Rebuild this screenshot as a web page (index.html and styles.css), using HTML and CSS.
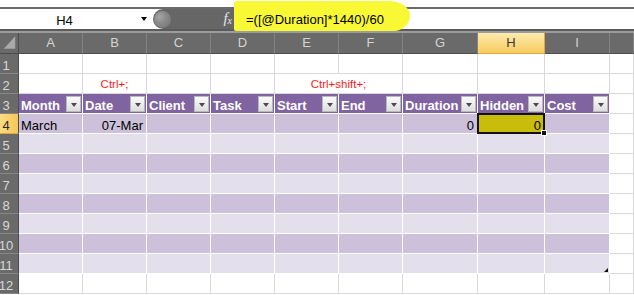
FILE: index.html
```html
<!DOCTYPE html>
<html>
<head>
<meta charset="utf-8">
<link rel="stylesheet" href="styles.css">
</head>
<body>
<div class="top">
  <div class="highlight"></div>
  <div class="topstrip"></div>
  <div class="fbar">
    <div class="namebox"><span class="nb-label">H4</span><span class="nb-arrow"></span></div>
    <div class="fxbox"><span class="knob"></span><span class="fx">f<sub>x</sub></span></div>
    <div class="formula">=([@Duration]*1440)/60</div>
  </div>
  <div class="gap"></div>
</div>
<div class="sheet">
  <!-- column headers -->
  <div class="corner"><svg width="19" height="21" viewBox="0 0 19 21"><polygon points="16,4 16,17 4,17" fill="#a9a9a9"/></svg></div>
  <div class="ch">A</div><div class="ch">B</div><div class="ch">C</div><div class="ch">D</div><div class="ch">E</div><div class="ch">F</div><div class="ch">G</div><div class="ch sel">H</div><div class="ch">I</div><div class="ch"></div>

  <!-- row 1 -->
  <div class="rh">1</div>
  <div class="c"></div><div class="c"></div><div class="c"></div><div class="c"></div><div class="c"></div><div class="c"></div><div class="c"></div><div class="c"></div><div class="c"></div><div class="c"></div>

  <!-- row 2 -->
  <div class="rh">2</div>
  <div class="c"></div><div class="c note">Ctrl+;</div><div class="c"></div><div class="c"></div><div class="c note span2">Ctrl+shift+;</div><div class="c"></div><div class="c"></div><div class="c"></div><div class="c"></div>

  <!-- row 3 -->
  <div class="rh">3</div>
  <div class="th"><span>Month</span><span class="dd"></span></div>
  <div class="th"><span>Date</span><span class="dd"></span></div>
  <div class="th"><span>Client</span><span class="dd"></span></div>
  <div class="th"><span>Task</span><span class="dd"></span></div>
  <div class="th"><span>Start</span><span class="dd"></span></div>
  <div class="th"><span>End</span><span class="dd"></span></div>
  <div class="th"><span>Duration</span><span class="dd"></span></div>
  <div class="th"><span>Hidden</span><span class="dd"></span></div>
  <div class="th"><span>Cost</span><span class="dd"></span></div>
  <div class="c"></div>

  <!-- row 4 -->
  <div class="rh sel">4</div>
  <div class="b1">March</div><div class="b1 num">07-Mar</div><div class="b1"></div><div class="b1"></div><div class="b1"></div><div class="b1"></div><div class="b1 num">0</div><div class="b1 num active">0<span class="selbox"></span><span class="handle"></span></div><div class="b1"></div><div class="c"></div>

  <!-- row 5 -->
  <div class="rh">5</div>
  <div class="b2"></div><div class="b2"></div><div class="b2"></div><div class="b2"></div><div class="b2"></div><div class="b2"></div><div class="b2"></div><div class="b2"></div><div class="b2"></div><div class="c"></div>

  <!-- row 6 -->
  <div class="rh">6</div>
  <div class="b1"></div><div class="b1"></div><div class="b1"></div><div class="b1"></div><div class="b1"></div><div class="b1"></div><div class="b1"></div><div class="b1"></div><div class="b1"></div><div class="c"></div>

  <!-- row 7 -->
  <div class="rh">7</div>
  <div class="b2"></div><div class="b2"></div><div class="b2"></div><div class="b2"></div><div class="b2"></div><div class="b2"></div><div class="b2"></div><div class="b2"></div><div class="b2"></div><div class="c"></div>

  <!-- row 8 -->
  <div class="rh">8</div>
  <div class="b1"></div><div class="b1"></div><div class="b1"></div><div class="b1"></div><div class="b1"></div><div class="b1"></div><div class="b1"></div><div class="b1"></div><div class="b1"></div><div class="c"></div>

  <!-- row 9 -->
  <div class="rh">9</div>
  <div class="b2"></div><div class="b2"></div><div class="b2"></div><div class="b2"></div><div class="b2"></div><div class="b2"></div><div class="b2"></div><div class="b2"></div><div class="b2"></div><div class="c"></div>

  <!-- row 10 -->
  <div class="rh">10</div>
  <div class="b1"></div><div class="b1"></div><div class="b1"></div><div class="b1"></div><div class="b1"></div><div class="b1"></div><div class="b1"></div><div class="b1"></div><div class="b1"></div><div class="c"></div>

  <!-- row 11 -->
  <div class="rh">11</div>
  <div class="b2"></div><div class="b2"></div><div class="b2"></div><div class="b2"></div><div class="b2"></div><div class="b2"></div><div class="b2"></div><div class="b2"></div><div class="b2 last"><span class="resize"></span></div><div class="c"></div>

  <!-- row 12 -->
  <div class="rh">12</div>
  <div class="c"></div><div class="c"></div><div class="c"></div><div class="c"></div><div class="c"></div><div class="c"></div><div class="c"></div><div class="c"></div><div class="c"></div><div class="c"></div>
</div>
</body>
</html>
```

FILE: styles.css
```css
html, body {
  margin: 0;
  padding: 0;
}
body {
  width: 634px;
  height: 295px;
  overflow: hidden;
  background: #fff;
  font-family: "Liberation Sans", Arial, sans-serif;
  font-size: 13px;
  color: #000;
}

/* ---------- formula bar ---------- */
.top {
  position: relative;
  height: 33px;
}
.topstrip {
  height: 7px;
  background: #fff;
}
.fbar {
  display: flex;
  height: 20px;
  border-top: 2px solid #6b6b6b;
  border-bottom: 2px solid #5a5a5a;
  background: #fff;
}
.gap {
  height: 2px;
  background: #9c9c9c;
}
.namebox {
  width: 150px;
  display: flex;
  align-items: center;
  background: #fff;
}
.nb-label {
  width: 129px;
  text-align: center;
  font-size: 13px;
  position: relative;
  top: 1px;
}
.nb-arrow {
  margin-left: 12px;
  width: 0;
  height: 0;
  border-left: 3px solid transparent;
  border-right: 3px solid transparent;
  border-top: 4px solid #000;
}
.fxbox {
  width: 82px;
  margin-left: 3px;
  background: #666;
  border-radius: 10px 0 0 10px;
  display: flex;
  align-items: center;
  justify-content: space-between;
}
.knob {
  width: 17px;
  height: 17px;
  margin-left: 1px;
  border-radius: 50%;
  background: radial-gradient(circle at 35% 35%, #a5a5a5 0, #8a8a8a 40%, #707070 100%);
}
.fx {
  font-family: "Liberation Serif", "Times New Roman", serif;
  font-style: italic;
  font-size: 15px;
  color: #e6e6e6;
  margin-right: 3px;
  line-height: 15px;
}
.fx sub {
  font-size: 10px;
  vertical-align: -1px;
}
.formula {
  flex: 1;
  display: flex;
  align-items: center;
  padding-left: 11px;
  font-size: 13px;
  position: relative;
  z-index: 2;
  background: transparent;
}
.highlight {
  position: absolute;
  left: 234px;
  top: 1px;
  width: 176px;
  height: 30px;
  background: #f8f834;
  border-radius: 3px 22px 16px 2px / 3px 14px 16px 2px;
  z-index: 1;
}

/* ---------- sheet grid ---------- */
.sheet {
  display: grid;
  grid-template-columns: 19px 64px 64px 64px 64px 64px 64px 75px 67px 65px 24px;
  grid-template-rows: 21px repeat(12, 20px);
}
.sheet > div {
  box-sizing: border-box;
  display: flex;
  align-items: flex-end;
  white-space: nowrap;
  overflow: hidden;
  line-height: 15px;
  font-size: 13px;
}
.corner {
  background: #6a6a6a;
  border-right: 1px solid #4c4c4c;
  border-bottom: 1px solid #4c4c4c;
}
.corner svg {
  display: block;
}
.ch {
  background: #6a6a6a;
  color: #d4d4d4;
  border-right: 1px solid #838383;
  border-bottom: 1px solid #4c4c4c;
  justify-content: center;
  padding-bottom: 3px;
}
.ch.sel {
  background: linear-gradient(#fdebb0, #f7cb5e);
  color: #3a3a3a;
  border-right-color: #e0a93c;
  border-bottom-color: #e0a93c;
}
.rh {
  background: #6a6a6a;
  color: #d8d8d8;
  border-right: 1px solid #4c4c4c;
  border-bottom: 1px solid #868686;
  justify-content: center;
  padding-right: 6px;
}
.rh.sel {
  background: linear-gradient(90deg, #fbdc85, #f6c655);
  color: #2a2a2a;
  border-bottom-color: #e0a93c;
}
.c {
  background: #fff;
  border-right: 1px solid #d9d9d9;
  border-bottom: 1px solid #d9d9d9;
  padding: 0 2px;
}
.note {
  color: #ff1a1a;
  font-size: 11.5px !important;
  justify-content: center;
  padding-bottom: 1px;
}
.span2 {
  grid-column: span 2;
}
.th {
  background: #8064a2;
  color: #fff;
  font-weight: bold;
  border-right: 1px solid #fff;
  border-bottom: 1px solid #fff;
  justify-content: space-between;
  padding: 0 1px 0 2px;
}
.dd {
  flex: none;
  width: 15px;
  height: 16px;
  margin-bottom: 1px;
  box-sizing: border-box;
  border: 1px solid #b9b9b9;
  background: linear-gradient(#fafafa, #dedede);
  display: flex;
  align-items: center;
  justify-content: center;
}
.dd::after {
  content: "";
  width: 0;
  height: 0;
  border-left: 3.5px solid transparent;
  border-right: 3.5px solid transparent;
  border-top: 4px solid #4a4a4a;
  margin-top: 1px;
}
.b1, .b2 {
  border-right: 1px solid #fff;
  border-bottom: 1px solid #fff;
  padding: 0 2px;
}
.b1 {
  background: #ccc0da;
}
.b2 {
  background: #e4dfec;
}
.num {
  justify-content: flex-end;
  padding-right: 3px !important;
}
.active {
  position: relative;
  overflow: visible !important;
  background: #c9bc0a;
}
.selbox {
  position: absolute;
  left: -1px;
  top: -1px;
  right: -1px;
  bottom: -1px;
  border: 2px solid #111;
  pointer-events: none;
}
.handle {
  position: absolute;
  right: -3px;
  bottom: -3px;
  width: 4px;
  height: 4px;
  background: #111;
  border: 1px solid #fff;
  z-index: 3;
}
.sheet > .active {
  overflow: visible;
  z-index: 2;
}
.last {
  position: relative;
}
.resize {
  position: absolute;
  right: 1px;
  bottom: 1px;
  width: 0;
  height: 0;
  border-left: 4px solid transparent;
  border-bottom: 4px solid #111;
}
```
